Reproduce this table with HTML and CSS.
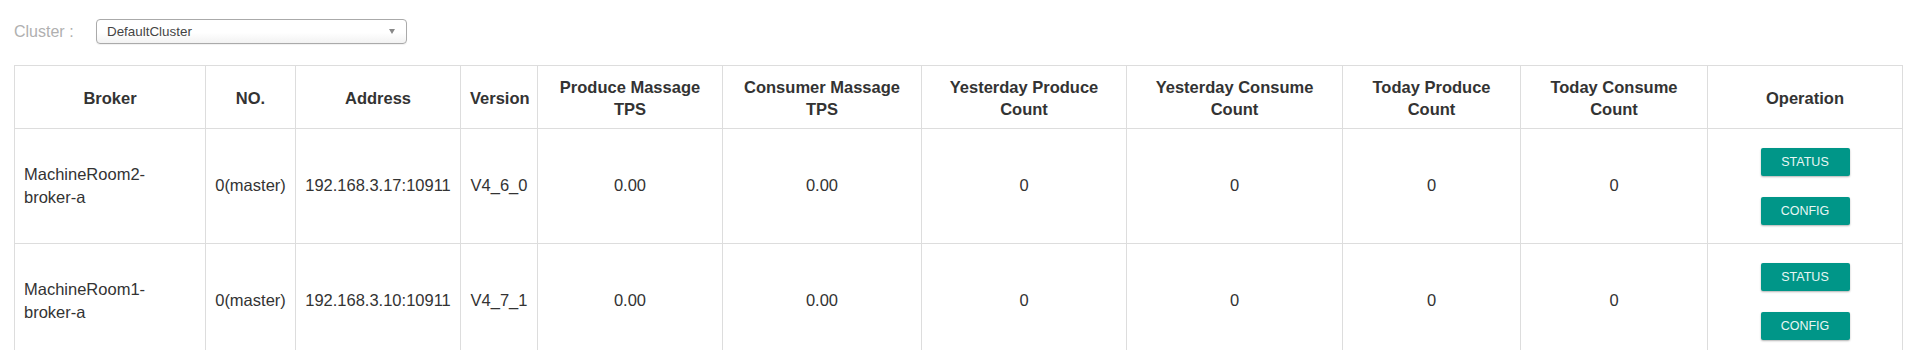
FILE: index.html
```html
<!DOCTYPE html>
<html lang="en">
<head>
<meta charset="utf-8">
<title>Cluster</title>
<link rel="stylesheet" href="styles.css">
</head>
<body>
<div class="page">
  <div class="cluster-bar">
    <label class="cluster-label">Cluster :</label>
    <div class="cluster-select">
      <span class="cluster-value">DefaultCluster</span>
      <span class="caret"></span>
    </div>
  </div>
  <table class="broker-table">
    <colgroup>
      <col class="c-broker"><col class="c-no"><col class="c-addr"><col class="c-ver">
      <col class="c-ptps"><col class="c-ctps"><col class="c-yp"><col class="c-yc">
      <col class="c-tp"><col class="c-tc"><col class="c-op">
    </colgroup>
    <thead>
      <tr>
        <th>Broker</th>
        <th>NO.</th>
        <th>Address</th>
        <th>Version</th>
        <th>Produce Massage TPS</th>
        <th>Consumer Massage TPS</th>
        <th>Yesterday Produce Count</th>
        <th>Yesterday Consume Count</th>
        <th>Today Produce Count</th>
        <th>Today Consume Count</th>
        <th>Operation</th>
      </tr>
    </thead>
    <tbody>
      <tr>
        <td class="left">MachineRoom2-broker-a</td>
        <td>0(master)</td>
        <td>192.168.3.17:10911</td>
        <td>V4_6_0</td>
        <td>0.00</td>
        <td>0.00</td>
        <td>0</td>
        <td>0</td>
        <td>0</td>
        <td>0</td>
        <td class="ops">
          <div class="ops-stack">
            <button class="btn">STATUS</button>
            <button class="btn">CONFIG</button>
          </div>
        </td>
      </tr>
      <tr>
        <td class="left">MachineRoom1-broker-a</td>
        <td>0(master)</td>
        <td>192.168.3.10:10911</td>
        <td>V4_7_1</td>
        <td>0.00</td>
        <td>0.00</td>
        <td>0</td>
        <td>0</td>
        <td>0</td>
        <td>0</td>
        <td class="ops">
          <div class="ops-stack">
            <button class="btn">STATUS</button>
            <button class="btn">CONFIG</button>
          </div>
        </td>
      </tr>
    </tbody>
  </table>
</div>
</body>
</html>
```
FILE: styles.css
```css
html, body {
  margin: 0;
  padding: 0;
  background: #fff;
}
body {
  font-family: "Liberation Sans", Arial, sans-serif;
  color: #333;
}
.page {
  padding: 19px 11px 0 14px;
}
.cluster-bar {
  display: flex;
  align-items: center;
  height: 25px;
  margin-bottom: 21px;
}
.cluster-label {
  width: 82px;
  font-size: 16px;
  color: #b0b0b0;
  line-height: 20px;
}
.cluster-select {
  box-sizing: border-box;
  width: 311px;
  height: 25px;
  border: 1px solid #aaa;
  border-radius: 4px;
  background: linear-gradient(to bottom, #fff 0%, #fff 55%, #f2f2f2 100%);
  display: flex;
  align-items: center;
  justify-content: space-between;
  padding: 0 9px 0 10px;
  box-shadow: 0 1px 1px rgba(0,0,0,0.06);
}
.cluster-value {
  font-size: 13.4px;
  color: #444;
}
.caret {
  width: 0;
  height: 0;
  border-left: 3.5px solid transparent;
  border-right: 3.5px solid transparent;
  border-top: 5px solid #888;
  margin-right: 2px;
}
.broker-table {
  border-collapse: collapse;
  table-layout: fixed;
  width: 1889px;
  font-size: 16.5px;
}
.c-broker { width: 191px; }
.c-no { width: 90px; }
.c-addr { width: 165px; }
.c-ver { width: 77px; }
.c-ptps { width: 185px; }
.c-ctps { width: 199px; }
.c-yp { width: 205px; }
.c-yc { width: 216px; }
.c-tp { width: 178px; }
.c-tc { width: 187px; }
.c-op { width: 195px; }
.broker-table th,
.broker-table td {
  border: 1px solid #ddd;
  text-align: center;
  vertical-align: middle;
  color: #333;
}
.broker-table th {
  font-weight: bold;
  line-height: 22px;
  padding: 9px 9px 8px;
  height: 45px;
}
.broker-table td {
  line-height: 23.5px;
  padding: 9px;
  height: 96px;
}
.broker-table td.left {
  text-align: left;
}
.broker-table td.ops {
  padding: 0;
}
.ops-stack {
  display: flex;
  flex-direction: column;
  align-items: center;
  gap: 21px;
  padding: 1px 0 0;
}
.btn {
  box-sizing: border-box;
  width: 89px;
  height: 28px;
  border: 0;
  border-radius: 2px;
  background: #009688;
  color: #e8f6f4;
  font-family: "Liberation Sans", Arial, sans-serif;
  font-size: 12.5px;
  padding: 0;
  box-shadow: 0 1px 2px rgba(0,0,0,0.3);
}
```
